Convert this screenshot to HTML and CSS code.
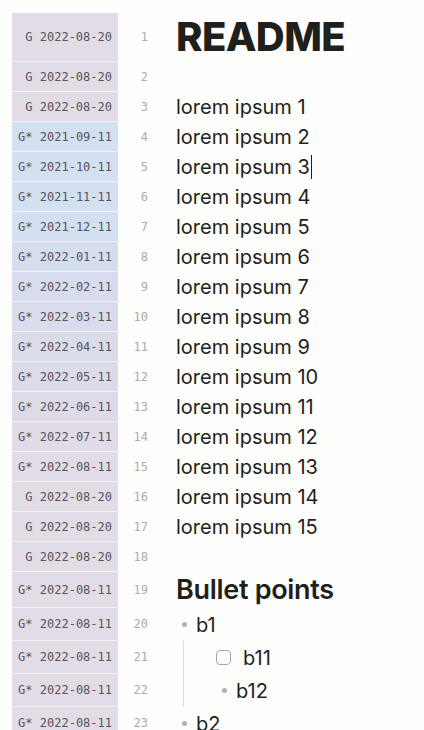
FILE: index.html
```html
<!DOCTYPE html>
<html>
<head>
<meta charset="utf-8">
<link rel="stylesheet" href="styles.css">
</head>
<body>
<div class="doc">
  <div class="row h1row"><div class="blame a8">G 2022-08-20</div><div class="ln">1</div><div class="txt"><h1 class="title">README</h1></div></div>
  <div class="row"><div class="blame a8">G 2022-08-20</div><div class="ln">2</div><div class="txt"></div></div>
  <div class="row"><div class="blame a8">G 2022-08-20</div><div class="ln">3</div><div class="txt">lorem ipsum 1</div></div>
  <div class="row"><div class="blame a0">G* 2021-09-11</div><div class="ln">4</div><div class="txt">lorem ipsum 2</div></div>
  <div class="row"><div class="blame a0">G* 2021-10-11</div><div class="ln">5</div><div class="txt">lorem ipsum 3<span class="caret"></span></div></div>
  <div class="row"><div class="blame a0">G* 2021-11-11</div><div class="ln">6</div><div class="txt">lorem ipsum 4</div></div>
  <div class="row"><div class="blame a0">G* 2021-12-11</div><div class="ln">7</div><div class="txt">lorem ipsum 5</div></div>
  <div class="row"><div class="blame a1">G* 2022-01-11</div><div class="ln">8</div><div class="txt">lorem ipsum 6</div></div>
  <div class="row"><div class="blame a2">G* 2022-02-11</div><div class="ln">9</div><div class="txt">lorem ipsum 7</div></div>
  <div class="row"><div class="blame a3">G* 2022-03-11</div><div class="ln">10</div><div class="txt">lorem ipsum 8</div></div>
  <div class="row"><div class="blame a4">G* 2022-04-11</div><div class="ln">11</div><div class="txt">lorem ipsum 9</div></div>
  <div class="row"><div class="blame a5">G* 2022-05-11</div><div class="ln">12</div><div class="txt">lorem ipsum 10</div></div>
  <div class="row"><div class="blame a6">G* 2022-06-11</div><div class="ln">13</div><div class="txt">lorem ipsum 11</div></div>
  <div class="row"><div class="blame a7">G* 2022-07-11</div><div class="ln">14</div><div class="txt">lorem ipsum 12</div></div>
  <div class="row"><div class="blame a8">G* 2022-08-11</div><div class="ln">15</div><div class="txt">lorem ipsum 13</div></div>
  <div class="row"><div class="blame a8">G 2022-08-20</div><div class="ln">16</div><div class="txt">lorem ipsum 14</div></div>
  <div class="row"><div class="blame a8">G 2022-08-20</div><div class="ln">17</div><div class="txt">lorem ipsum 15</div></div>
  <div class="row"><div class="blame a8">G 2022-08-20</div><div class="ln">18</div><div class="txt"></div></div>
  <div class="row h2row"><div class="blame a8">G* 2022-08-11</div><div class="ln">19</div><div class="txt"><h2 class="sub">Bullet points</h2></div></div>
  <div class="row brow"><div class="blame a8">G* 2022-08-11</div><div class="ln">20</div><div class="txt"><span class="dot"></span><span class="btext">b1</span></div></div>
  <div class="row brow"><div class="blame a8">G* 2022-08-11</div><div class="ln">21</div><div class="txt"><div class="guide"><span class="check"></span><span class="ctext">b11</span></div></div></div>
  <div class="row brow"><div class="blame a8">G* 2022-08-11</div><div class="ln">22</div><div class="txt"><div class="guide"><span class="dot sub-dot"></span><span class="btext">b12</span></div></div></div>
  <div class="row brow"><div class="blame a8">G* 2022-08-11</div><div class="ln">23</div><div class="txt"><span class="dot"></span><span class="btext">b2</span></div></div>
</div>
</body>
</html>
```

FILE: styles.css
```css
html, body {
  margin: 0;
  padding: 0;
  background: #fdfdfb;
  overflow: hidden;
}
.doc {
  padding: 13px 0 0 12px;
  display: flex;
  flex-direction: column;
}
.row {
  display: flex;
  height: 30px;
  align-items: stretch;
}
.h1row { height: 49px; }
.h2row { height: 36px; }
.brow { height: 33px; }
.blame {
  width: 106px;
  box-sizing: border-box;
  border-bottom: 1px solid #f4f1f5;
  padding-right: 6px;
  text-align: right;
  font-family: "DejaVu Sans Mono", monospace;
  font-size: 12px;
  color: #58545c;
  display: flex;
  align-items: center;
  justify-content: flex-end;
}
.a0 { background: #d3e0f1; }
.a1 { background: #d5deef; }
.a2 { background: #d7ddee; }
.a3 { background: #d8dcec; }
.a4 { background: #dadcea; }
.a5 { background: #dcdbe9; }
.a6 { background: #dedbe8; }
.a7 { background: #e0dbe7; }
.a8 { background: #e2dce6; }
.ln {
  width: 30px;
  text-align: right;
  font-family: "DejaVu Sans Mono", monospace;
  font-size: 12px;
  color: #acacac;
  display: flex;
  align-items: center;
  justify-content: flex-end;
  padding-bottom: 1px;
  box-sizing: border-box;
}
.txt {
  flex: 1;
  padding-left: 28px;
  font-family: Inter, "Noto Sans", sans-serif;
  font-size: 20px;
  color: #1f1f1c;
  display: flex;
  align-items: center;
  padding-bottom: 1px;
  box-sizing: border-box;
}
.title {
  margin: 0;
  font-size: 40px;
  font-weight: 800;
  letter-spacing: -0.6px;
  line-height: 48px;
}
.sub {
  margin: 0;
  font-size: 27px;
  font-weight: 600;
  letter-spacing: -0.3px;
  line-height: 34px;
}
.caret {
  display: inline-block;
  width: 1.5px;
  height: 24px;
  background: #1f1f1c;
  margin-left: 1px;
}
.dot {
  width: 5px;
  height: 5px;
  border-radius: 50%;
  background: #b0b0ae;
  margin-left: 6px;
  margin-right: 9px;
  flex: none;
}
.brow .txt { padding-bottom: 0; }
.guide {
  margin-left: 7px;
  border-left: 1px solid #dcdcd8;
  height: 100%;
  display: flex;
  align-items: center;
  flex: 1;
}
.check {
  width: 13px;
  height: 13px;
  border: 1.3px solid #a8a8a6;
  border-radius: 4px;
  margin-left: 32px;
  margin-right: 12px;
  flex: none;
}
.sub-dot {
  margin-left: 38px;
  margin-right: 9px;
}
```
